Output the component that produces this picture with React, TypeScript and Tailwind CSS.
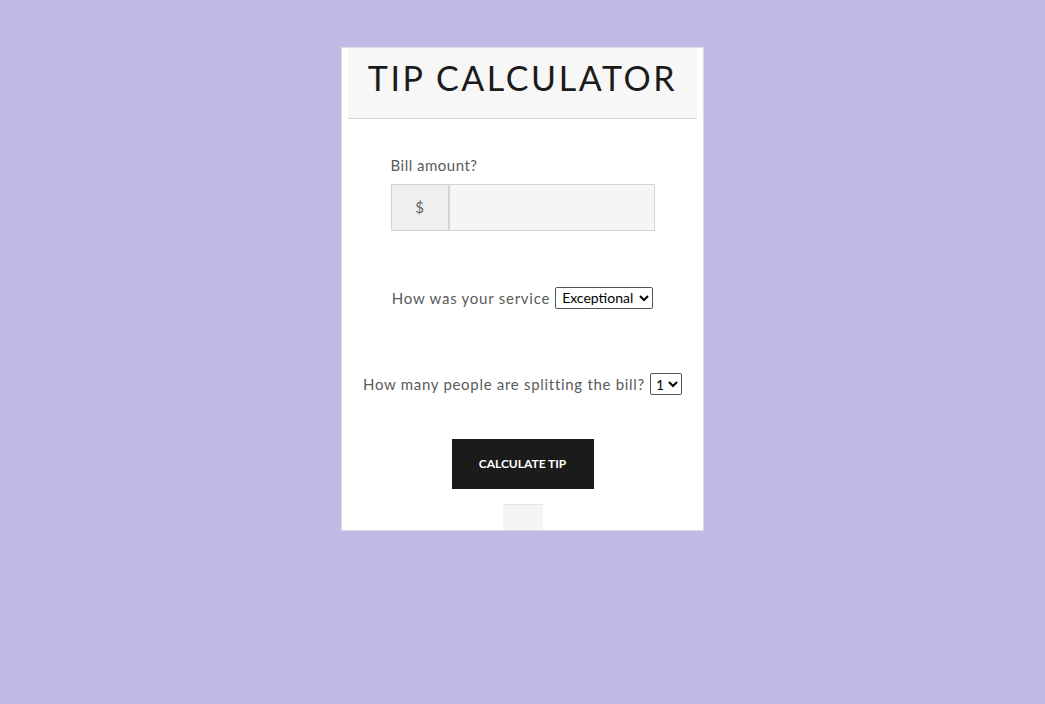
/**
 * Tip Calculator card
 */

export default function App() {
  return (
    <div
      className="min-h-[704px] w-full bg-[#c0bbe5] pt-[47px]"
      style={{ fontFamily: '"Lato", "Noto Sans", sans-serif' }}
    >
      <div className="mx-auto flex h-[484px] w-[363px] flex-col border border-[#dcdcdc] bg-white px-[6px]">
        {/* Header */}
        <div className="flex h-[71px] items-center justify-center border-b border-[#d6d6d6] bg-[#f7f7f7] pb-[10px]">
          <h1 className="text-[34px] font-normal leading-none tracking-[2.6px] text-[#1b1b1b]">TIP CALCULATOR</h1>
        </div>

        {/* Bill amount */}
        <div className="mx-auto mt-[35px] w-[264px]">
          <label className="block text-[15px] tracking-[0.5px] text-[#5a5a5a]">Bill amount?</label>
          <div className="mt-[7px] flex h-[47px] border border-[#d4d4d8]">
            <div className="flex w-[58px] items-center justify-center border-r-2 border-[#d4d4d8] bg-[#eeeff1] text-[15px] text-[#666]">
              $
            </div>
            <input className="flex-1 bg-[#f5f5f7] outline-none" />
          </div>
        </div>

        {/* Service */}
        <div className="mt-[56px] flex items-center justify-center gap-[5px] text-[15px] tracking-[0.75px] text-[#5a5a5a]">
          <span>How was your service</span>
          <select className="h-[22px] w-[98px] rounded-[2px] border border-[#555] px-[2px] text-[14px] tracking-normal text-black">
            <option>Exceptional</option>
          </select>
        </div>

        {/* Split */}
        <div className="mt-[64px] flex items-center justify-center gap-[5px] text-[15px] tracking-[0.7px] text-[#5a5a5a]">
          <span>How many people are splitting the bill?</span>
          <select className="h-[22px] w-[32px] rounded-[2px] border border-[#555] px-[1px] text-[14px] tracking-normal text-black">
            <option>1</option>
          </select>
        </div>

        {/* Button */}
        <button className="mx-auto mt-[43px] h-[50px] w-[142px] bg-[#1b1b1b] text-[12px] font-bold text-white">
          CALCULATE TIP
        </button>

        <div className="mx-auto mt-auto h-[26px] w-[40px] border-t border-[#e4e4e4] bg-[#f5f5f5]" />
      </div>
    </div>
  )
}
